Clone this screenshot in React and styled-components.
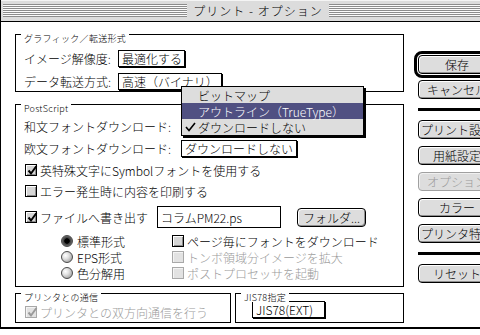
import React from "react";
import styled, { createGlobalStyle, css } from "styled-components";

const GlobalStyle = createGlobalStyle`
  html, body {
    margin: 0;
    padding: 0;
    background: #fff;
    overflow: hidden;
  }
  body {
    font-family: "Noto Sans CJK JP", "Noto Sans", sans-serif;
    font-size: 12px;
    font-weight: 300;
    color: #000;
  }
`;

const Window = styled.div`
  width: 514px;
  background: #fff;
  border-left: 1px solid #000;
  border-right: 1px solid #000;
  border-bottom: 2px solid #000;
  box-shadow: 0 3px 0 #777;
`;

const TitleBar = styled.div`
  height: 21px;
  display: flex;
  align-items: center;
  gap: 4px;
  padding: 0 2px;
  background: #dcdcdc;
  border-bottom: 1px solid #000;
  box-shadow: inset 0 1px 0 #f4f4f4;
`;

const Stripes = styled.div`
  flex: 1;
  height: 13px;
  background: repeating-linear-gradient(
    to bottom,
    #8c8c8c 0 1px,
    #fbfbfb 1px 2px
  );
`;

const Title = styled.div`
  font-size: 12px;
  line-height: 21px;
  letter-spacing: 1px;
  padding: 0 2px;
  white-space: pre;
`;

const Body = styled.div`
  display: flex;
  padding: 12px 0 4px 14px;
`;

const LeftColumn = styled.div`
  width: 389px;
  display: flex;
  flex-direction: column;
`;

const RightColumn = styled.div`
  margin-left: 14px;
  padding-top: 17px;
  display: flex;
  flex-direction: column;
`;

/* group boxes */
const Group = styled.div`
  position: relative;
  border: 1px solid #000;
  padding: ${(p) => p.$pt}px 8px ${(p) => p.$pb}px ${(p) => p.$pl || 8}px;
  margin-top: ${(p) => p.$mt || 0}px;
  flex: ${(p) => (p.$grow ? 1 : "none")};
  width: ${(p) => (p.$w ? `${p.$w}px` : "auto")};
  box-sizing: border-box;
`;

const GroupLabel = styled.span`
  position: absolute;
  top: -1px;
  left: 5px;
  padding: 0 3px;
  background: #fff;
  font-size: 9px;
  line-height: 9px;
  letter-spacing: 0.3px;
  white-space: nowrap;
`;

const BottomRow = styled.div`
  display: flex;
  gap: 4px;
  margin-top: 6px;
`;

/* rows */
const Row = styled.div`
  display: flex;
  align-items: center;
  height: ${(p) => p.$h || 17}px;
  margin-top: ${(p) => p.$mt || 0}px;
`;

const RowLabel = styled.span`
  width: ${(p) => p.$w}px;
  flex: none;
  white-space: nowrap;
`;

const PopupAnchor = styled.div`
  position: relative;
`;

const Popup = styled.div`
  width: ${(p) => p.$w}px;
  height: 17px;
  box-sizing: border-box;
  border: 1px solid #000;
  box-shadow: 1px 1px 0 #000;
  background: #fff;
  padding: 0 3px;
  display: flex;
  align-items: center;
  white-space: nowrap;
  overflow: hidden;
`;

/* open pop-up menu */
const Menu = styled.div`
  position: absolute;
  left: 0;
  top: -32px;
  width: 183px;
  box-sizing: border-box;
  border: 1px solid #000;
  background: #dddddd;
  box-shadow: 2px 2px 0 #000;
  z-index: 2;
`;

const MenuItem = styled.div`
  position: relative;
  height: 16px;
  display: flex;
  align-items: center;
  padding-left: 16px;
  white-space: nowrap;
  background: ${(p) => (p.$active ? "#505082" : "transparent")};
  color: ${(p) => (p.$active ? "#fff" : "#000")};
`;

const MenuCheck = styled.svg`
  position: absolute;
  left: 3px;
  top: 3px;
`;

/* checkboxes & radios */
const CheckItem = styled.div`
  display: flex;
  align-items: center;
  gap: 3px;
  height: 16px;
  white-space: nowrap;
  color: ${(p) => (p.$disabled ? "#9a9a9a" : "#000")};
  margin-top: ${(p) => p.$mt || 0}px;
  width: ${(p) => (p.$w ? `${p.$w}px` : "auto")};
  flex: none;
`;

const Box = styled.span`
  position: relative;
  width: 12px;
  height: 12px;
  margin-left: 1px;
  box-sizing: border-box;
  flex: none;
  border: 1px solid ${(p) => (p.$disabled ? "#a8a8a8" : "#000")};
  background: ${(p) => (p.$disabled ? "#e2e2e2" : "#d6d6d6")};
  box-shadow: ${(p) =>
    p.$disabled ? "inset 1px 1px 0 #f4f4f4" : "inset 1px 1px 0 #fff, inset -1px -1px 0 #8c8c8c"};
`;

const Tick = styled.svg`
  position: absolute;
  left: 0;
  top: -1px;
`;

const Radio = styled.span`
  width: 12px;
  height: 12px;
  box-sizing: border-box;
  flex: none;
  border-radius: 50%;
  border: 1px solid #4a4a4a;
  background: radial-gradient(circle at 35% 35%, #fff 0, #e2e2e2 35%, #8a8a8a 100%);
  ${(p) =>
    p.$on &&
    css`
      background: radial-gradient(circle, #000 0 2.4px, #3a3a3a 3px, #9a9a9a 100%);
    `}
`;

const Options = styled.div`
  display: grid;
  grid-template-columns: 110px auto;
  grid-auto-rows: 16px;
  padding-left: 37px;
  margin-top: 5px;
`;

const RadioItem = styled.div`
  display: flex;
  align-items: center;
  gap: 4px;
  white-space: nowrap;
`;

const TextField = styled.div`
  width: 124px;
  height: 22px;
  box-sizing: border-box;
  border: 1px solid #000;
  padding: 0 3px;
  display: flex;
  align-items: center;
  white-space: nowrap;
`;

/* push buttons */
const PushButton = styled.div`
  width: ${(p) => p.$w || 78}px;
  height: 19px;
  box-sizing: border-box;
  flex: none;
  border: 1px solid ${(p) => (p.$disabled ? "#a0a0a0" : "#000")};
  border-radius: 4px;
  background: #dddddd;
  box-shadow: ${(p) =>
    p.$disabled ? "inset 1px 1px 0 #f0f0f0" : "inset 1px 1px 0 #fff, inset -1px -1px 0 #909090"};
  display: flex;
  align-items: center;
  justify-content: center;
  color: ${(p) => (p.$disabled ? "#9a9a9a" : "#000")};
  white-space: nowrap;
  overflow: hidden;
  margin-top: ${(p) => p.$mt || 0}px;
  margin-left: ${(p) => p.$ml || 0}px;
`;

const DefaultRing = styled.div`
  width: fit-content;
  margin-left: -4px;
  padding: 1px;
  border: 3px solid #000;
  border-radius: 8px;
`;

const Separator = styled.div`
  width: 78px;
  height: 3px;
  background: #000;
  margin-top: ${(p) => p.$mt}px;
`;

const CheckMark = ({ disabled }) => (
  <Tick width="13" height="13" viewBox="0 0 13 13">
    <path
      d="M2.5 6.5 L5 9.5 L10.5 2"
      fill="none"
      stroke={disabled ? "#9a9a9a" : "#000"}
      strokeWidth="2"
    />
  </Tick>
);

const Check = ({ checked, disabled, children, ...rest }) => (
  <CheckItem $disabled={disabled} {...rest}>
    <Box $disabled={disabled}>{checked && <CheckMark disabled={disabled} />}</Box>
    <span>{children}</span>
  </CheckItem>
);

const App = () => {
  return (
    <>
      <GlobalStyle />
      <Window>
        <TitleBar>
          <Stripes />
          <Title>プリント - オプション</Title>
          <Stripes />
        </TitleBar>
        <Body>
          <LeftColumn>
            <Group $pt={15} $pb={1}>
              <GroupLabel>グラフィック／転送形式</GroupLabel>
              <Row>
                <RowLabel $w={94}>イメージ解像度:</RowLabel>
                <Popup $w={67}>最適化する</Popup>
              </Row>
              <Row $mt={6}>
                <RowLabel $w={94}>データ転送方式:</RowLabel>
                <Popup $w={104}>高速（バイナリ）</Popup>
              </Row>
            </Group>

            <Group $pt={13} $pb={5} $mt={12}>
              <GroupLabel>PostScript</GroupLabel>
              <Row>
                <RowLabel $w={157}>和文フォントダウンロード:</RowLabel>
                <PopupAnchor>
                  {/* the open menu covers this pop-up entirely */}
                  <Popup $w={116} />
                  <Menu>
                    <MenuItem>ビットマップ</MenuItem>
                    <MenuItem $active>アウトライン（TrueType）</MenuItem>
                    <MenuItem>
                      <MenuCheck width="11" height="10" viewBox="0 0 11 10">
                        <path d="M1 5 L4 8.5 L10 1" fill="none" stroke="#000" strokeWidth="1.6" />
                      </MenuCheck>
                      ダウンロードしない
                    </MenuItem>
                  </Menu>
                </PopupAnchor>
              </Row>
              <Row $mt={5}>
                <RowLabel $w={157}>欧文フォントダウンロード:</RowLabel>
                <Popup $w={116}>ダウンロードしない</Popup>
              </Row>
              <Check checked $mt={5}>
                英特殊文字にSymbolフォントを使用する
              </Check>
              <Check $mt={5}>エラー発生時に内容を印刷する</Check>
              <Row $h={22} $mt={7}>
                <Check checked $w={133}>
                  ファイルへ書き出す
                </Check>
                <TextField>コラムPM22.ps</TextField>
                <PushButton $w={69} $ml={16}>
                  フォルダ...
                </PushButton>
              </Row>
              <Options>
                <RadioItem>
                  <Radio $on />
                  標準形式
                </RadioItem>
                <Check>ページ毎にフォントをダウンロード</Check>
                <RadioItem>
                  <Radio />
                  EPS形式
                </RadioItem>
                <Check disabled>トンボ領域分イメージを拡大</Check>
                <RadioItem>
                  <Radio />
                  色分解用
                </RadioItem>
                <Check disabled>ポストプロセッサを起動</Check>
              </Options>
            </Group>

            <BottomRow>
              <Group $pt={10} $pb={2} $w={216}>
                <GroupLabel>プリンタとの通信</GroupLabel>
                <Check checked disabled>
                  プリンタとの双方向通信を行う
                </Check>
              </Group>
              <Group $pt={7} $pb={2} $pl={16} $grow>
                <GroupLabel>JIS78指定</GroupLabel>
                <Popup $w={73}>JIS78(EXT)</Popup>
              </Group>
            </BottomRow>
          </LeftColumn>

          <RightColumn>
            <DefaultRing>
              <PushButton>保存</PushButton>
            </DefaultRing>
            <PushButton $mt={2}>キャンセル</PushButton>
            <Separator $mt={9} />
            <PushButton $mt={9}>プリント設定</PushButton>
            <PushButton $mt={7}>用紙設定</PushButton>
            <PushButton $mt={7} $disabled>
              オプション
            </PushButton>
            <PushButton $mt={7}>カラー</PushButton>
            <PushButton $mt={7}>プリンタ特性</PushButton>
            <Separator $mt={9} />
            <PushButton $mt={9}>リセット</PushButton>
          </RightColumn>
        </Body>
      </Window>
    </>
  );
};

export default App;
